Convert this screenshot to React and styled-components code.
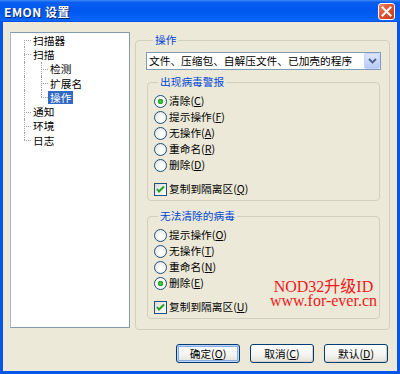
import React from 'react';
import styled, { createGlobalStyle } from 'styled-components';

const GlobalStyle = createGlobalStyle`
  html, body {
    margin: 0;
    padding: 0;
    background: #ece9d8;
  }
  body {
    font-family: "Noto Sans CJK SC", "Liberation Sans", sans-serif;
    font-size: 10.7px;
    color: #000;
  }
`;

const treeItems = [
    { label: '扫描器', level: 0, first: true },
    { label: '扫描', level: 0 },
    { label: '检测', level: 1 },
    { label: '扩展名', level: 1 },
    { label: '操作', level: 1, lastChild: true, selected: true },
    { label: '通知', level: 0 },
    { label: '环境', level: 0 },
    { label: '日志', level: 0, last: true },
];

const alertOptions = [
    { text: '清除', key: 'C', checked: true },
    { text: '提示操作', key: 'F' },
    { text: '无操作', key: 'A' },
    { text: '重命名', key: 'R' },
    { text: '删除', key: 'D' },
];

const failOptions = [
    { text: '提示操作', key: 'O' },
    { text: '无操作', key: 'T' },
    { text: '重命名', key: 'N' },
    { text: '删除', key: 'E', checked: true },
];

const Label = ({ text, k }) => (
    <LabelText>{text}(<u>{k}</u>)</LabelText>
);

const Radio = ({ checked, text, k }) => (
    <OptionRow>
        <RadioCircle $checked={checked} />
        <Label text={text} k={k} />
    </OptionRow>
);

const Check = ({ text, k }) => (
    <CheckRow>
        <CheckBox>
            <svg width="9" height="9" viewBox="0 0 9 9">
                <polyline points="1,4 3,6.5 8,1.5" fill="none" stroke="#21a121" strokeWidth="2" />
            </svg>
        </CheckBox>
        <Label text={text} k={k} />
    </CheckRow>
);

const App = () => {
    return (
        <>
            <GlobalStyle />
            <Window>
                <TitleBar>
                    <Title>EMON 设置</Title>
                    <CloseButton>
                        <svg width="11" height="11" viewBox="0 0 11 11">
                            <path d="M1.5 1.5 L9.5 9.5 M9.5 1.5 L1.5 9.5" stroke="#fff" strokeWidth="2" strokeLinecap="square" />
                        </svg>
                    </CloseButton>
                </TitleBar>

                <Body>
                    <Main>
                        <Tree>
                            {treeItems.map((item) => (
                                <TreeRow key={item.label} $level={item.level}>
                                    {item.level === 0 ? (
                                        <>
                                            <VLine $x={13} $top={item.first ? '50%' : '0'} $bottom={item.last ? '50%' : '0'} />
                                            <HLine $x={13} />
                                        </>
                                    ) : (
                                        <>
                                            <VLine $x={13} $top="0" $bottom="0" />
                                            <VLine $x={30} $top="0" $bottom={item.lastChild ? '50%' : '0'} />
                                            <HLine $x={30} />
                                        </>
                                    )}
                                    <TreeLabel $selected={item.selected}>{item.label}</TreeLabel>
                                </TreeRow>
                            ))}
                        </Tree>

                        <OuterGroup>
                            <Legend $outer>操作</Legend>
                            <Select>
                                <SelectText>文件、压缩包、自解压文件、已加壳的程序</SelectText>
                                <SelectArrow>
                                    <svg width="9" height="6" viewBox="0 0 9 6">
                                        <polyline points="1,1 4.5,4.5 8,1" fill="none" stroke="#4d6185" strokeWidth="1.8" />
                                    </svg>
                                </SelectArrow>
                            </Select>

                            <Group>
                                <Legend>出现病毒警报</Legend>
                                {alertOptions.map((o) => (
                                    <Radio key={o.key} checked={o.checked} text={o.text} k={o.key} />
                                ))}
                                <Check text="复制到隔离区" k="Q" />
                            </Group>

                            <Group $spaced>
                                <Legend>无法清除的病毒</Legend>
                                {failOptions.map((o) => (
                                    <Radio key={o.key} checked={o.checked} text={o.text} k={o.key} />
                                ))}
                                <Check text="复制到隔离区" k="U" />
                                <Watermark>
                                    <WatermarkLine>NOD32升级ID</WatermarkLine>
                                    <WatermarkLine>www.for-ever.cn</WatermarkLine>
                                </Watermark>
                            </Group>
                        </OuterGroup>
                    </Main>

                    <Footer>
                        <Button $default><Label text="确定" k="O" /></Button>
                        <Button><Label text="取消" k="C" /></Button>
                        <Button><Label text="默认" k="D" /></Button>
                    </Footer>
                </Body>
            </Window>
        </>
    );
};

const Window = styled.div`
    width: 400px;
    height: 374px;
    display: flex;
    flex-direction: column;
    overflow: hidden;
`

const TitleBar = styled.div`
    height: 22px;
    flex-shrink: 0;
    display: flex;
    align-items: center;
    justify-content: space-between;
    padding: 0 5px 0 4px;
    background: linear-gradient(to bottom, #3d8cf5 0%, #0a5eef 10%, #0058ee 45%, #0362f5 85%, #0d6cff 92%, #0048dd 100%);
`

const Title = styled.div`
    color: #fff;
    font-weight: 700;
    font-size: 12px;
    letter-spacing: 0.5px;
    text-shadow: 1px 1px 0 #0a1e6a;
`

const CloseButton = styled.div`
    width: 17px;
    height: 17px;
    box-sizing: border-box;
    border: 1px solid #fff;
    border-radius: 3px;
    background: linear-gradient(135deg, #e9876f 0%, #df5331 45%, #c9391a 100%);
    display: flex;
    align-items: center;
    justify-content: center;
`

const Body = styled.div`
    flex: 1;
    display: flex;
    flex-direction: column;
    background: #ece9d8;
    border: 3px solid #0757ea;
    border-top: none;
    padding: 10px 7px 0 7px;
`

const Main = styled.div`
    display: flex;
    align-items: flex-start;
    gap: 5px;
`

const Tree = styled.div`
    width: 120px;
    height: 296px;
    box-sizing: border-box;
    background: #fff;
    border: 1px solid #7f9db9;
    border-left-color: #a9b8c6;
`

const TreeRow = styled.div`
    position: relative;
    height: 14.3px;
    display: flex;
    align-items: center;
    padding-left: ${p => (p.$level ? 37 : 20)}px;
`

const VLine = styled.span`
    position: absolute;
    left: ${p => p.$x}px;
    top: ${p => p.$top};
    bottom: ${p => p.$bottom};
    border-left: 1px dotted #a0a0a0;
`

const HLine = styled.span`
    position: absolute;
    left: ${p => p.$x}px;
    top: 50%;
    width: 7px;
    border-top: 1px dotted #a0a0a0;
`

const TreeLabel = styled.span`
    display: inline-block;
    height: 13px;
    line-height: 13px;
    padding: 0 2px;
    background: ${p => (p.$selected ? '#316ac5' : 'transparent')};
    color: ${p => (p.$selected ? '#fff' : '#000')};
`

const LabelText = styled.span`
    display: inline-block;
    height: 14px;
    line-height: 14px;
    white-space: nowrap;
`

const OuterGroup = styled.fieldset`
    margin: 1px 0 0 0;
    width: 255px;
    box-sizing: border-box;
    border: 1px solid #d0d0bf;
    border-radius: 4px;
    padding: 5px 9px 10px 11px;
    min-width: 0;
`

const Legend = styled.legend`
    padding: 0 2px;
    margin-left: ${p => (p.$outer ? 6 : 4)}px;
    line-height: 14px;
    color: #0046d5;
`

const Select = styled.div`
    height: 18px;
    margin: 0 -1px;
    box-sizing: border-box;
    border: 1px solid #7f9db9;
    background: #fff;
    display: flex;
    align-items: center;
    justify-content: space-between;
    padding-left: 2px;
`

const SelectText = styled.span`
    white-space: nowrap;
    line-height: 14px;
`

const SelectArrow = styled.div`
    width: 16px;
    height: 16px;
    box-sizing: border-box;
    border: 1px solid #c3d3fd;
    border-radius: 2px;
    background: linear-gradient(to bottom, #dce6fd, #b6c9f7);
    display: flex;
    align-items: center;
    justify-content: center;
`

const Group = styled.fieldset`
    position: relative;
    margin: ${p => (p.$spaced ? 8 : 5)}px 0 0 0;
    border: 1px solid #d0d0bf;
    border-radius: 4px;
    padding: 4px 6px 3px 6px;
    min-width: 0;
`

const OptionRow = styled.div`
    height: 16px;
    display: flex;
    align-items: center;
    gap: 2px;
`

const RadioCircle = styled.span`
    width: 13px;
    height: 13px;
    box-sizing: border-box;
    border-radius: 50%;
    border: 1px solid #1c5180;
    background: ${p => (p.$checked
        ? 'radial-gradient(circle, #4fd04f 0, #21a121 2.5px, #f4f4f0 3px, #fff 100%)'
        : 'radial-gradient(circle at 60% 60%, #fff 20%, #dcdcd7 100%)')};
`

const CheckRow = styled(OptionRow)`
    margin-top: 8px;
`

const CheckBox = styled.span`
    width: 13px;
    height: 13px;
    box-sizing: border-box;
    border: 1px solid #1c5180;
    background: linear-gradient(135deg, #dcdcd7, #fff);
    display: flex;
    align-items: center;
    justify-content: center;
`

const Watermark = styled.div`
    position: absolute;
    right: 2px;
    bottom: 10px;
    display: flex;
    flex-direction: column;
    align-items: center;
    color: #f01818;
    font-family: "Liberation Serif", "Noto Sans CJK SC", serif;
    font-size: 16px;
`

const WatermarkLine = styled.div`
    height: 14px;
    line-height: 14px;
    white-space: nowrap;
`

const Footer = styled.div`
    display: flex;
    justify-content: flex-end;
    gap: 10px;
    margin-top: 14px;
    padding-right: 2px;
`

const Button = styled.div`
    width: 64px;
    height: 19px;
    box-sizing: border-box;
    border: 1px solid #003c74;
    border-radius: 3px;
    background: linear-gradient(to bottom, #fff 0%, #f3f3ef 60%, #e3e1d6 100%);
    box-shadow: ${p => (p.$default
        ? 'inset 0 0 0 1px #bcd4f6, inset 0 0 0 2px #89ade4'
        : 'inset -1px -1px 0 #d6d0c5')};
    display: flex;
    align-items: center;
    justify-content: center;
`

export default App;
